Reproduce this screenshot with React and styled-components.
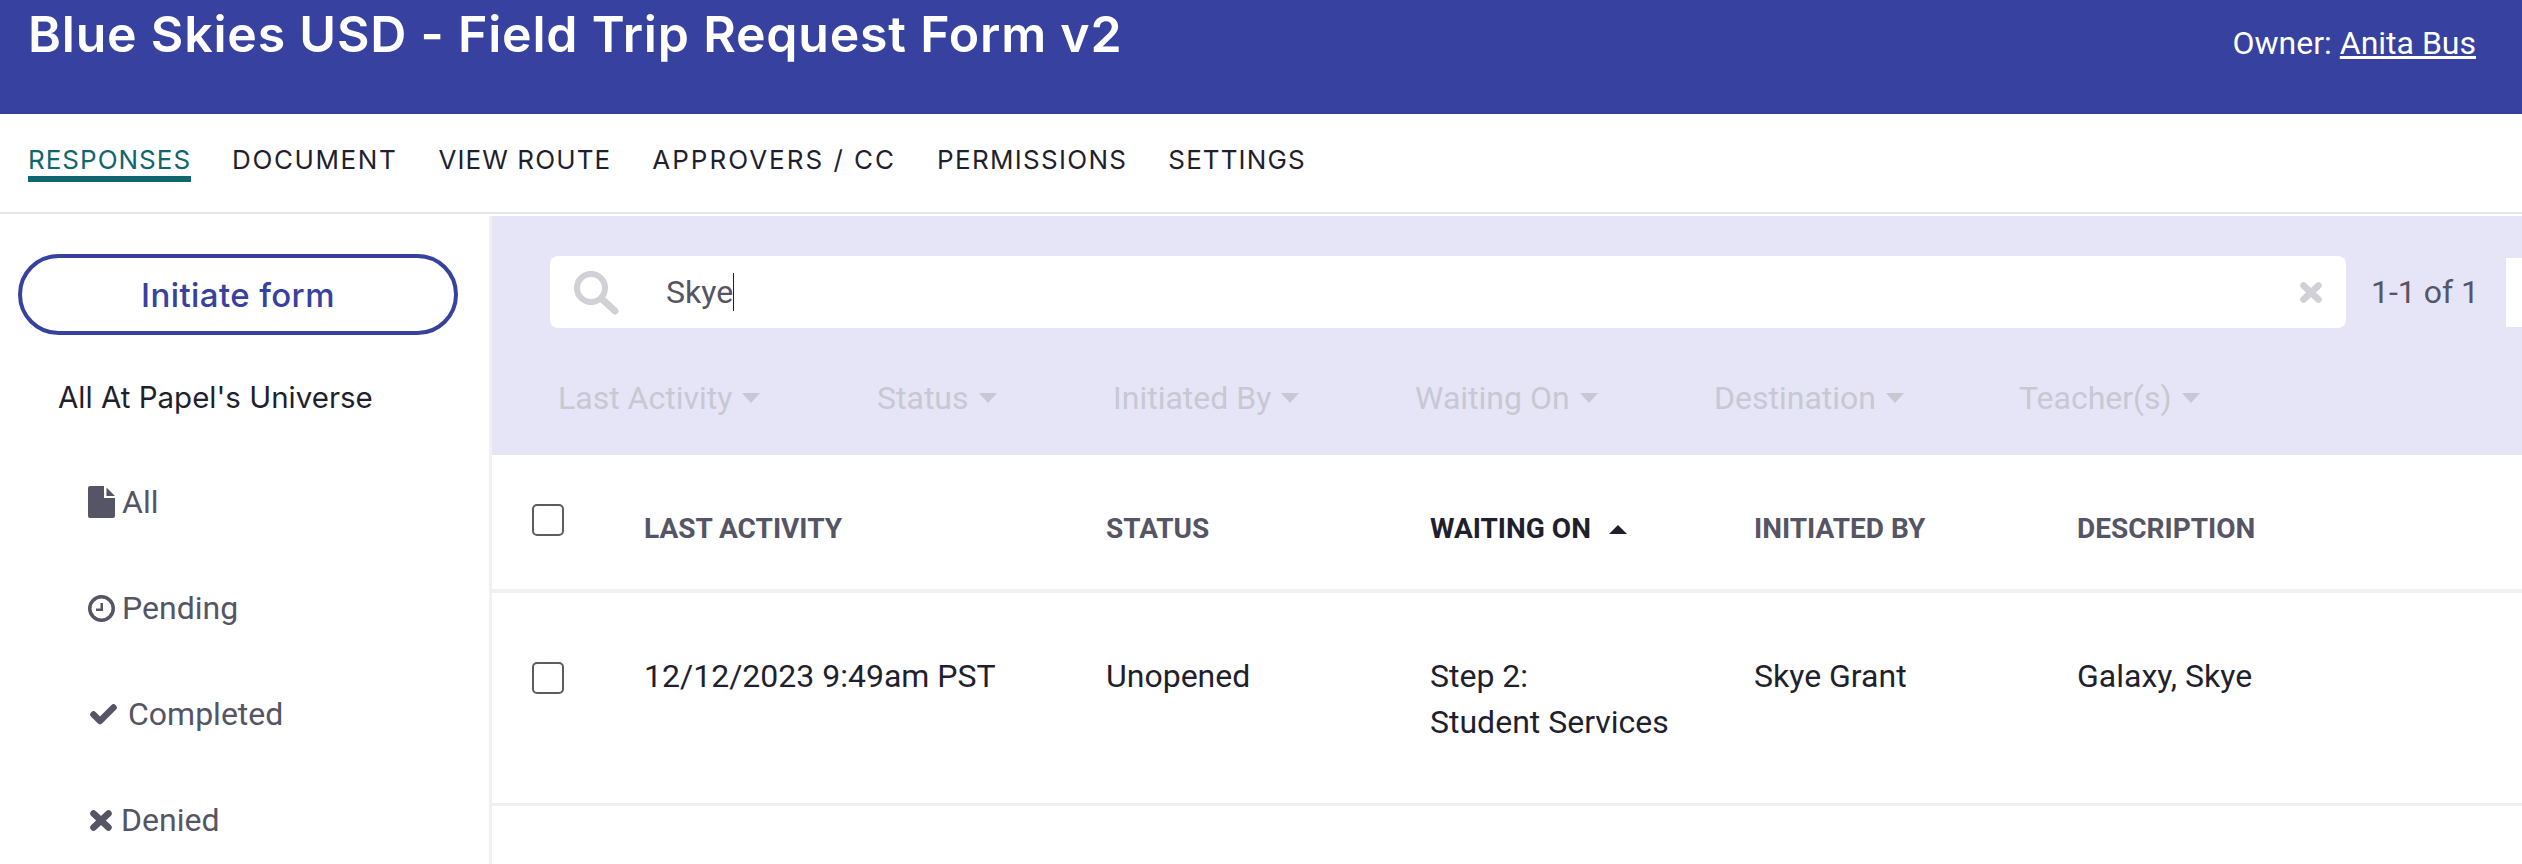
import React from 'react';
import styled, { createGlobalStyle } from 'styled-components';

const GlobalStyle = createGlobalStyle`
  html, body {
    margin: 0;
    padding: 0;
    background: #ffffff;
  }
  * {
    box-sizing: border-box;
  }
`;

const Page = styled.div`
  width: 2522px;
  height: 864px;
  overflow: hidden;
  font-family: Roboto, sans-serif;
  color: #1f1f2e;
`;

const Header = styled.header`
  height: 114px;
  background: #37419f;
  color: #ffffff;
  display: flex;
  justify-content: space-between;
  align-items: flex-start;
  padding: 0 46px 0 28px;
`;

const Title = styled.h1`
  margin: 4px 0 0;
  font-family: Inter, sans-serif;
  font-size: 50px;
  line-height: 60px;
  font-weight: 600;
  letter-spacing: 0.8px;
`;

const Owner = styled.div`
  margin-top: 25px;
  font-size: 32px;
  line-height: 36px;
  a {
    color: #ffffff;
    text-decoration: underline;
  }
`;

const Nav = styled.nav`
  height: 100px;
  display: flex;
  gap: 41px;
  padding: 29px 0 0 28px;
  border-bottom: 2px solid #e6e6e6;
`;

const NavItem = styled.a`
  height: 33px;
  font-family: Inter, sans-serif;
  font-size: 26px;
  line-height: 33px;
  letter-spacing: ${(p) => p.$ls}px;
  color: ${(p) => (p.$active ? '#10666e' : '#1f1f2e')};
  box-sizing: content-box;
  border-bottom: ${(p) => (p.$active ? '6px solid #10666e' : '0')};
`;

const Body = styled.div`
  display: flex;
  height: 650px;
  padding-top: 2px;
`;

const Sidebar = styled.aside`
  width: 492px;
  flex-shrink: 0;
  border-right: 3px solid #f0f0f2;
  padding: 38px 0 0 18px;
`;

const InitiateButton = styled.button`
  display: block;
  width: 440px;
  height: 81px;
  border: 4px solid #37419f;
  border-radius: 41px;
  background: #ffffff;
  color: #37419f;
  font-family: Inter, sans-serif;
  font-size: 33px;
  font-weight: 500;
  letter-spacing: 0.4px;
`;

const Universe = styled.div`
  margin: 42px 0 0 40px;
  font-family: Inter, sans-serif;
  font-size: 29.5px;
  line-height: 40px;
`;

const StatusList = styled.ul`
  list-style: none;
  margin: 65px 0 0 70px;
  padding: 0;
  display: flex;
  flex-direction: column;
  gap: 66px;
`;

const StatusItem = styled.li`
  display: flex;
  align-items: center;
  gap: 7px;
  height: 40px;
  font-size: 32px;
  color: #555565;
  svg {
    flex-shrink: 0;
  }
`;

const Main = styled.main`
  flex: 1;
  min-width: 0;
`;

const FilterPanel = styled.section`
  height: 239px;
  background: #e5e5f7;
  padding: 40px 0 0 58px;
`;

const SearchRow = styled.div`
  display: flex;
  align-items: center;
`;

const SearchBox = styled.div`
  width: 1796px;
  height: 72px;
  flex-shrink: 0;
  background: #ffffff;
  border-radius: 8px;
  display: flex;
  align-items: center;
  padding: 0 22px 0 23px;
  color: #d0d0d6;
  svg {
    flex-shrink: 0;
  }
`;

const SearchText = styled.div`
  flex: 1;
  margin-left: 47px;
  font-size: 32px;
  color: #555565;
  span {
    border-right: 1px solid #1f1f2e;
  }
`;

const Count = styled.div`
  margin-left: 25px;
  font-size: 32px;
  color: #555565;
  white-space: nowrap;
`;

const PageBox = styled.div`
  width: 60px;
  height: 69px;
  margin-left: 27px;
  flex-shrink: 0;
  background: #ffffff;
`;

const Filters = styled.div`
  display: flex;
  margin-top: 50px;
  padding-left: 8px;
`;

const Filter = styled.div`
  width: ${(p) => p.$w}px;
  flex-shrink: 0;
  font-size: 32px;
  line-height: 40px;
  color: #c8c8d2;
  display: flex;
  align-items: center;
  gap: 10px;
`;

const Caret = styled.span`
  width: 0;
  height: 0;
  border-left: 9px solid transparent;
  border-right: 9px solid transparent;
  border-top: ${(p) => (p.$up ? '0' : '10px solid currentColor')};
  border-bottom: ${(p) => (p.$up ? '9px solid currentColor' : '0')};
`;

const Row = styled.div`
  display: grid;
  grid-template-columns: 152px 462px 324px 324px 323px 1fr;
  border-bottom: ${(p) => (p.$head ? '4px solid #f0f0f2' : '3px solid #f0f0f2')};
  height: ${(p) => p.$h}px;
`;

const Cell = styled.div`
  padding-top: ${(p) => p.$top}px;
  font-size: ${(p) => (p.$head ? 28 : 32)}px;
  font-weight: ${(p) => (p.$head ? 700 : 400)};
  line-height: ${(p) => (p.$head ? 32 : 46)}px;
  color: ${(p) => (p.$head && !p.$sorted ? '#555565' : '#1f1f2e')};
  display: ${(p) => (p.$sorted ? 'flex' : 'block')};
  gap: 18px;
  align-items: center;
  align-self: start;
`;

const CheckCell = styled.div`
  padding: ${(p) => p.$top}px 0 0 40px;
`;

const Check = styled.span`
  display: block;
  width: 32px;
  height: 32px;
  border: 2px solid #5c5c5c;
  border-radius: 5px;
  background: #ffffff;
`;

const FileIcon = () => (
  <svg width="27" height="32" viewBox="0 0 27 32">
    <path fill="currentColor" d="M2 0H16V12H27V30Q27 32 25 32H2Q0 32 0 30V2Q0 0 2 0ZM18.5 1.5L27 10H18.5Z" />
  </svg>
);

const ClockIcon = () => (
  <svg width="27" height="27" viewBox="0 0 27 27">
    <path fill="currentColor" fillRule="evenodd" d="M13.5 0A13.5 13.5 0 1 0 13.5 27A13.5 13.5 0 1 0 13.5 0ZM13.5 3.5A10 10 0 1 1 13.5 23.5A10 10 0 1 1 13.5 3.5ZM12.5 8H15V16H8V13.5H12.5Z" />
  </svg>
);

const CheckIcon = () => (
  <svg width="33" height="21" viewBox="0 0 33 21">
    <path fill="none" stroke="currentColor" strokeWidth="6.5" strokeLinecap="round" strokeLinejoin="round" d="M5.5 10.5L12 17L25.5 3.5" />
  </svg>
);

const CrossIcon = () => (
  <svg width="26" height="21" viewBox="0 0 26 21">
    <path fill="none" stroke="currentColor" strokeWidth="6.5" strokeLinecap="round" d="M5.5 3.5L20.5 17.5M20.5 3.5L5.5 17.5" />
  </svg>
);

const SearchIcon = () => (
  <svg width="46" height="46" viewBox="0 0 46 46">
    <circle cx="18" cy="19" r="14" fill="none" stroke="currentColor" strokeWidth="6" />
    <path fill="none" stroke="currentColor" strokeWidth="7" strokeLinecap="round" d="M29 30L42 42" />
  </svg>
);

const navItems = [
  ['RESPONSES', 1],
  ['DOCUMENT', 1.6],
  ['VIEW ROUTE', 1.1],
  ['APPROVERS / CC', 2],
  ['PERMISSIONS', 1.3],
  ['SETTINGS', 1.1],
];

const filters = [
  ['Last Activity', 319],
  ['Status', 236],
  ['Initiated By', 302],
  ['Waiting On', 299],
  ['Destination', 305],
  ['Teacher(s)', 200],
];

const App = () => {
  return (
    <Page>
      <GlobalStyle />
      <Header>
        <Title>Blue Skies USD - Field Trip Request Form v2</Title>
        <Owner>Owner: <a href="#owner">Anita Bus</a></Owner>
      </Header>
      <Nav>
        {navItems.map(([label, ls], i) => (
          <NavItem key={label} $ls={ls} $active={i === 0}>{label}</NavItem>
        ))}
      </Nav>
      <Body>
        <Sidebar>
          <InitiateButton>Initiate form</InitiateButton>
          <Universe>All At Papel's Universe</Universe>
          <StatusList>
            <StatusItem><FileIcon />All</StatusItem>
            <StatusItem><ClockIcon />Pending</StatusItem>
            <StatusItem><CheckIcon />Completed</StatusItem>
            <StatusItem><CrossIcon />Denied</StatusItem>
          </StatusList>
        </Sidebar>
        <Main>
          <FilterPanel>
            <SearchRow>
              <SearchBox>
                <SearchIcon />
                <SearchText><span>Skye</span></SearchText>
                <CrossIcon />
              </SearchBox>
              <Count>1-1 of 1</Count>
              <PageBox />
            </SearchRow>
            <Filters>
              {filters.map(([label, w]) => (
                <Filter key={label} $w={w}>{label}<Caret /></Filter>
              ))}
            </Filters>
          </FilterPanel>
          <Row $head $h={138}>
            <CheckCell $top={49}><Check /></CheckCell>
            <Cell $head $top={58}>LAST ACTIVITY</Cell>
            <Cell $head $top={58}>STATUS</Cell>
            <Cell $head $sorted $top={58}>WAITING ON<Caret $up /></Cell>
            <Cell $head $top={58}>INITIATED BY</Cell>
            <Cell $head $top={58}>DESCRIPTION</Cell>
          </Row>
          <Row $h={213}>
            <CheckCell $top={69}><Check /></CheckCell>
            <Cell $top={60}>12/12/2023 9:49am PST</Cell>
            <Cell $top={60}>Unopened</Cell>
            <Cell $top={60}>Step 2:<br />Student Services</Cell>
            <Cell $top={60}>Skye Grant</Cell>
            <Cell $top={60}>Galaxy, Skye</Cell>
          </Row>
        </Main>
      </Body>
    </Page>
  );
};

export default App;
